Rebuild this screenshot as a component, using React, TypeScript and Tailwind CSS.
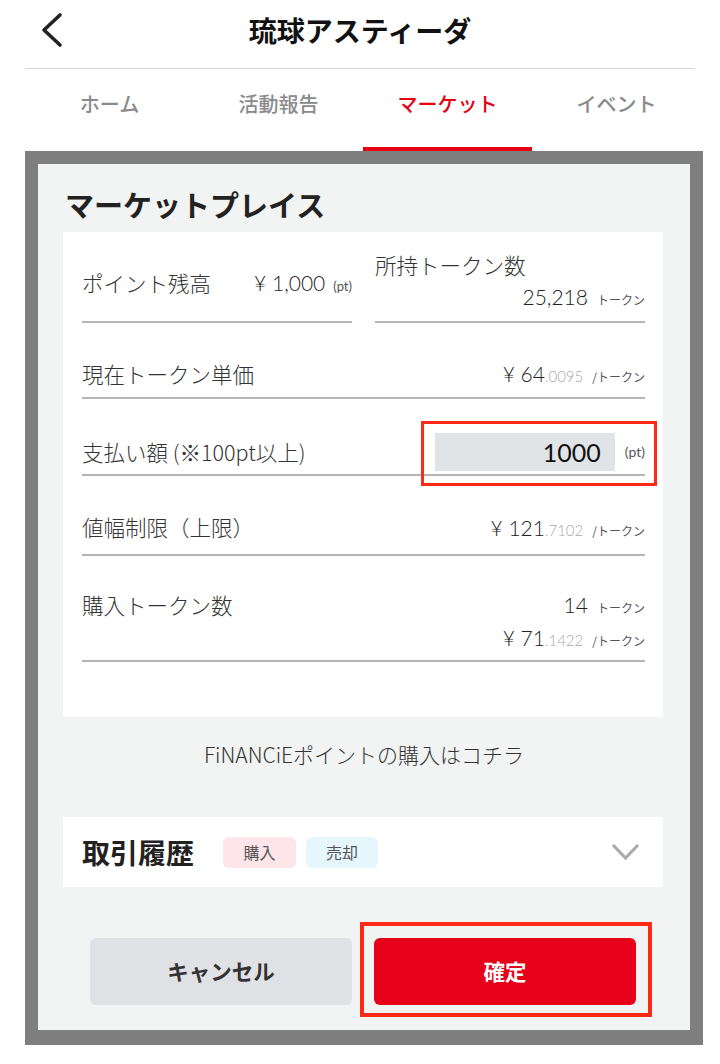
import React, { useState } from 'react';

const Unit = ({ children }: { children: React.ReactNode }) => (
  <span className="ml-[9px] text-[12px] text-[#555] font-['Noto_Sans_CJK_JP',sans-serif] font-normal">{children}</span>
);

const Num = ({ children, cls = '' }: { children: React.ReactNode; cls?: string }) => (
  <span className={`font-['Lato',sans-serif] font-light text-[21px] text-[#222] ${cls}`}>{children}</span>
);

const Price = ({ int, dec }: { int: string; dec: string }) => (
  <span>
    <Num>
      ¥ {int}
      <span className="text-[15px] text-[#aaa]">.{dec}</span>
    </Num>
    <Unit>/トークン</Unit>
  </span>
);

const Row = ({ label, children, cls }: { label: string; children: React.ReactNode; cls: string }) => (
  <div className={`flex justify-between border-b-2 border-[#b5b5b5] ${cls}`}>
    <span className="text-[21.5px] leading-[30px] text-[#333] font-light">{label}</span>
    {children}
  </div>
);

export default function App() {
  const [tab, setTab] = useState('マーケット');
  const [amount, setAmount] = useState('1000');
  const tabs = ['ホーム', '活動報告', 'マーケット', 'イベント'];

  return (
    <div className="w-[720px] h-[1064px] bg-white overflow-hidden font-['Noto_Sans_CJK_JP','Noto_Sans',sans-serif]">
      {/* header */}
      <div className="mx-[25px] h-[69px] border-b border-[#d6d6d6] relative flex justify-center pt-[12px]">
        <button className="absolute left-[14px] top-[12px]">
          <svg width="26" height="36" viewBox="0 0 26 36" fill="none">
            <polyline points="21,3 5,18 21,33" stroke="#222" strokeWidth="3.6" strokeLinecap="round" strokeLinejoin="round" />
          </svg>
        </button>
        <h1 className="text-[28px] leading-[36px] font-bold text-[#111]">琉球アスティーダ</h1>
      </div>

      {/* tabs */}
      <div className="mx-[25px] grid grid-cols-4 w-[676px]">
        {tabs.map((t) => (
          <button
            key={t}
            onClick={() => setTab(t)}
            className={`h-[82px] pt-[20px] flex flex-col items-center justify-between text-[20px] leading-[30px] font-medium ${
              tab === t ? 'text-[#e60012]' : 'text-[#8a8a8a]'
            }`}
          >
            {t}
            <span className={`block w-full h-[4px] ${tab === t ? 'bg-[#e60012]' : 'bg-transparent'}`} />
          </button>
        ))}
      </div>

      {/* dim overlay */}
      <div className="mx-[25px] w-[678px] bg-[#7f7f7f] pt-[13px] pb-[15px] px-[13px]">
        <div className="bg-[#f2f3f3] pt-[20px] pb-[25px]">
          <h2 className="pl-[27px] text-[29px] leading-[40px] font-bold text-[#222]">マーケットプレイス</h2>

          <div className="mt-[8px] ml-[25px] mr-[27px] bg-white pt-[18px] pb-[55px] pl-[19px] pr-[18px]">
            {/* row 1 */}
            <div className="grid grid-cols-2 gap-[23px]">
              <div className="flex items-center justify-between border-b-2 border-[#b5b5b5] pb-[5px]">
                <span className="text-[21.5px] leading-[30px] text-[#333] font-light">ポイント残高</span>
                <span>
                  <Num>¥ 1,000</Num>
                  <span className="ml-[8px] text-[13px] text-[#555] font-['Lato',sans-serif]">(pt)</span>
                </span>
              </div>
              <div className="border-b-2 border-[#b5b5b5] pb-[5px]">
                <div className="text-[21.5px] leading-[30px] text-[#333] font-light">所持トークン数</div>
                <div className="text-right leading-[33px]">
                  <Num>25,218</Num>
                  <Unit>トークン</Unit>
                </div>
              </div>
            </div>

            <Row label="現在トークン単価" cls="pt-[35px] pb-[7px] items-center">
              <Price int="64" dec="0095" />
            </Row>

            <Row label="支払い額 (※100pt以上)" cls="pt-[34px] pb-[3px] items-center">
              <div className="relative flex items-center h-[38px]">
                <input
                  value={amount}
                  onChange={(e) => setAmount(e.target.value)}
                  className="w-[180px] h-[38px] bg-[#e1e4e7] text-right pr-[14px] font-['Lato',sans-serif] font-normal text-[25px] text-[#111] outline-none"
                />
                <span className="ml-[10px] text-[14px] text-[#555] font-['Lato',sans-serif]">(pt)</span>
                <span className="absolute -left-[14px] -right-[12px] -top-[12px] -bottom-[15px] border-[3px] border-[#ff2a16] pointer-events-none" />
              </div>
            </Row>

            <Row label="値幅制限（上限）" cls="pt-[36px] pb-[11px] items-center">
              <Price int="121" dec="7102" />
            </Row>

            <Row label="購入トークン数" cls="pt-[34px] pb-[4px] items-start">
              <div className="flex flex-col items-end">
                <span className="leading-[30px]">
                  <Num>14</Num>
                  <Unit>トークン</Unit>
                </span>
                <span className="leading-[30px]">
                  <Price int="71" dec="1422" />
                </span>
              </div>
            </Row>
          </div>

          <p className="mt-[22px] text-center text-[21px] leading-[30px] text-[#333] font-light">
            FiNANCiEポイントの購入はコチラ
          </p>

          <div className="mt-[48px] ml-[25px] mr-[27px] h-[70px] bg-white flex items-center pl-[19px] pr-[23px]">
            <span className="text-[28px] font-bold text-[#222]">取引履歴</span>
            <span className="ml-[29px] w-[73px] h-[31px] rounded-[6px] bg-[#fde5ea] flex items-center justify-center text-[16px] text-[#555]">
              購入
            </span>
            <span className="ml-[10px] w-[72px] h-[31px] rounded-[6px] bg-[#e5f6fd] flex items-center justify-center text-[16px] text-[#555]">
              売却
            </span>
            <svg className="ml-auto" width="29" height="18" viewBox="0 0 29 18" fill="none">
              <polyline points="2,2 14.5,15 27,2" stroke="#a9a9a9" strokeWidth="3" />
            </svg>
          </div>

          <div className="mt-[51px] flex gap-[22px] pl-[52px]">
            <button className="w-[262px] h-[67px] rounded-[6px] bg-[#dfe1e5] text-[21.5px] font-bold text-[#333]">
              キャンセル
            </button>
            <div className="relative">
              <button className="w-[262px] h-[67px] rounded-[6px] bg-[#e60019] text-[21.5px] font-bold text-white">
                確定
              </button>
              <span className="absolute -left-[14px] -right-[16px] -top-[16px] -bottom-[12px] border-4 border-[#ff2a16] pointer-events-none" />
            </div>
          </div>
        </div>
      </div>
    </div>
  );
}
